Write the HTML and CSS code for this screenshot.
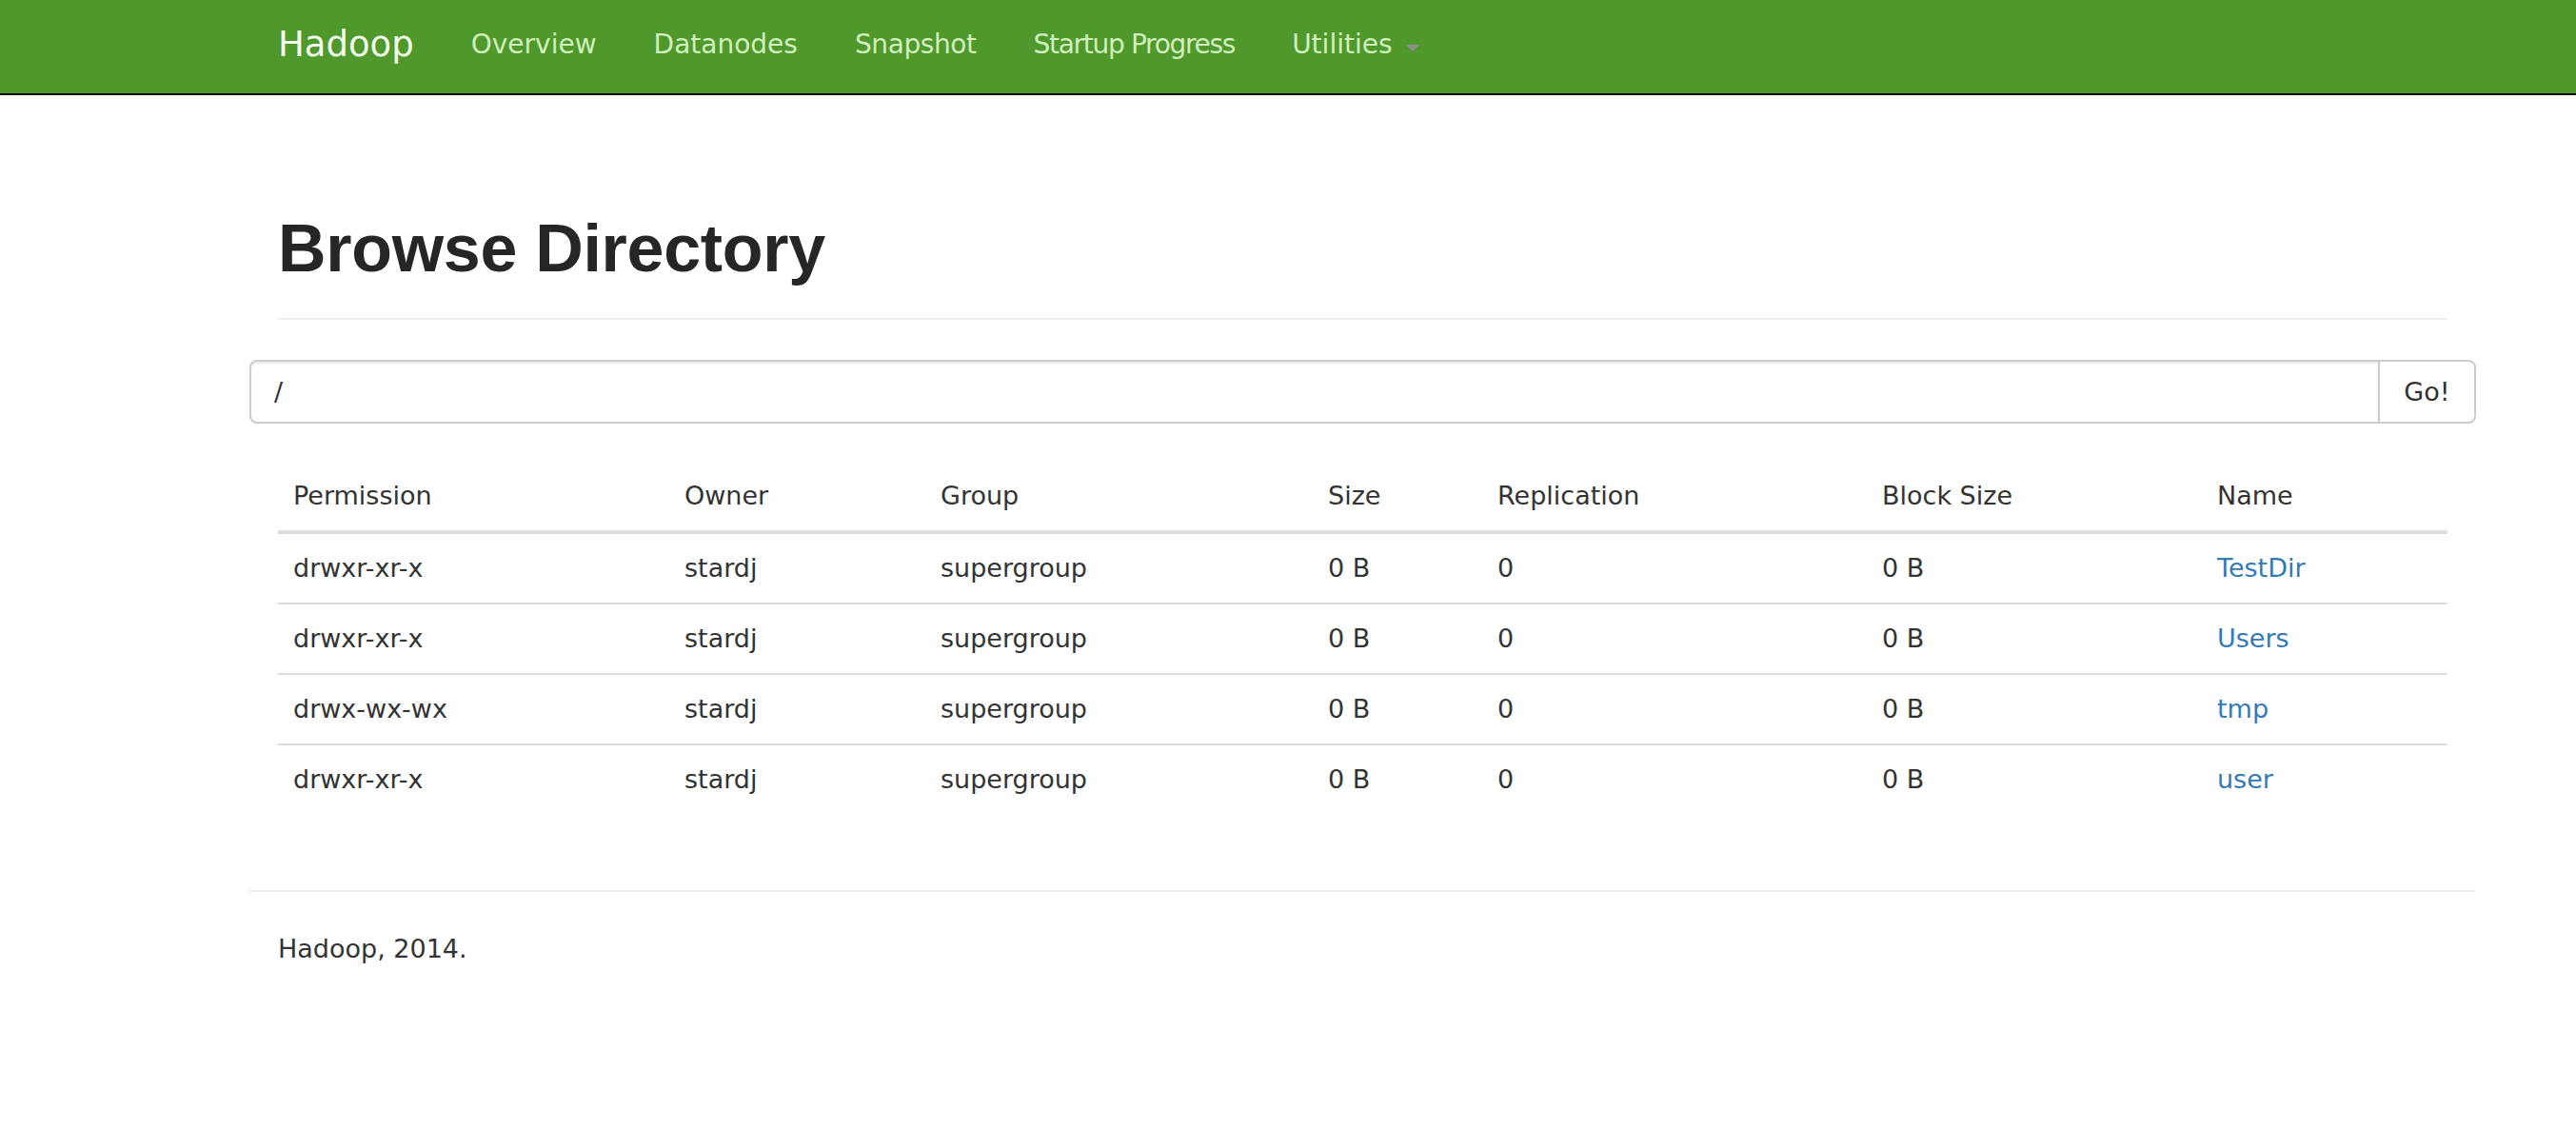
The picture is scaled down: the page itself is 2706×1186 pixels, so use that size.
FILE: index.html
```html
<!DOCTYPE html>
<html lang="en">
<head>
<meta charset="utf-8">
<title>Browsing HDFS</title>
<link rel="stylesheet" href="styles.css">
</head>
<body>
<header class="navbar">
  <div class="container nav-inner">
    <a class="brand" href="#">Hadoop</a>
    <ul class="nav">
      <li><a href="#">Overview</a></li>
      <li><a href="#">Datanodes</a></li>
      <li><a href="#" class="snug">Snapshot</a></li>
      <li><a href="#" class="tight">Startup Progress</a></li>
      <li><a href="#" class="dropdown">Utilities <span class="caret"></span></a></li>
    </ul>
  </div>
</header>

<main class="container">
  <div class="page-header">
    <h1>Browse Directory</h1>
  </div>

  <form class="input-group">
    <input class="path-input" type="text" value="/">
    <button class="go-btn" type="button">Go!</button>
  </form>

  <table class="listing">
    <colgroup>
      <col class="c-perm"><col class="c-owner"><col class="c-group"><col class="c-size"><col class="c-repl"><col class="c-block"><col class="c-name">
    </colgroup>
    <thead>
      <tr><th>Permission</th><th>Owner</th><th>Group</th><th>Size</th><th>Replication</th><th>Block Size</th><th>Name</th></tr>
    </thead>
    <tbody>
      <tr><td>drwxr-xr-x</td><td>stardj</td><td>supergroup</td><td>0 B</td><td>0</td><td>0 B</td><td><a href="#">TestDir</a></td></tr>
      <tr><td>drwxr-xr-x</td><td>stardj</td><td>supergroup</td><td>0 B</td><td>0</td><td>0 B</td><td><a href="#">Users</a></td></tr>
      <tr><td>drwx-wx-wx</td><td>stardj</td><td>supergroup</td><td>0 B</td><td>0</td><td>0 B</td><td><a href="#">tmp</a></td></tr>
      <tr><td>drwxr-xr-x</td><td>stardj</td><td>supergroup</td><td>0 B</td><td>0</td><td>0 B</td><td><a href="#">user</a></td></tr>
    </tbody>
  </table>

  <hr class="footer-rule">
  <footer class="footer">
    <p>Hadoop, 2014.</p>
  </footer>
</main>
</body>
</html>
```

FILE: styles.css
```css
* { box-sizing: border-box; }

html, body {
  margin: 0;
  padding: 0;
  background: #fff;
}

body {
  font-family: "DejaVu Sans", "Liberation Sans", sans-serif;
  font-size: 27px;
  line-height: 40px;
  color: #333;
}

a { text-decoration: none; }

.container {
  width: 2339px;
  margin-left: 262px;
  padding: 0 30px;
}

/* Navbar */
.navbar {
  background: #4f982c;
  height: 100px;
  border-bottom: 2px solid #0b0b0b;
}

.nav-inner {
  display: flex;
  align-items: center;
  height: 98px;
}

.brand {
  color: #f4fcee;
  font-size: 37px;
  line-height: 94px;
  padding-bottom: 4px;
  padding-right: 30px;
}

.nav {
  display: flex;
  list-style: none;
  margin: 0;
  padding: 0;
}

.nav a {
  display: flex;
  align-items: center;
  color: #cfefbd;
  font-size: 28px;
  line-height: 94px;
  padding: 0 30px 4px;
}

.nav a.snug {
  letter-spacing: -0.4px;
}

.nav a.tight {
  letter-spacing: -1.3px;
}

.caret {
  display: inline-block;
  width: 0;
  height: 0;
  margin-left: 14px;
  margin-top: 6px;
  border-top: 7px solid #8e8e8e;
  border-left: 7px solid transparent;
  border-right: 7px solid transparent;
}

/* Page header */
.page-header {
  margin-top: 121px;
  padding-bottom: 33px;
  border-bottom: 2px solid #eee;
}

.page-header h1 {
  margin: 0;
  font-family: "Liberation Sans", Arial, sans-serif;
  font-weight: bold;
  font-size: 70px;
  line-height: 80px;
  letter-spacing: -0.3px;
  color: #262626;
}

/* Input group */
.input-group {
  display: flex;
  margin: 42px -30px 0;
  height: 67px;
}

.path-input {
  flex: 1;
  height: 67px;
  border: 2px solid #ccc;
  border-right: none;
  border-radius: 8px 0 0 8px;
  padding: 0 24px;
  font-family: "DejaVu Sans", sans-serif;
  font-size: 27px;
  color: #333;
  box-shadow: inset 0 2px 2px rgba(0,0,0,0.075);
  outline: none;
}

.go-btn {
  width: 103px;
  height: 67px;
  border: 2px solid #ccc;
  border-radius: 0 8px 8px 0;
  background: #fff;
  font-family: "DejaVu Sans", sans-serif;
  font-size: 27px;
  color: #333;
  padding: 0;
}

/* Table */
.listing {
  width: 100%;
  margin-top: 40px;
  border-collapse: collapse;
  table-layout: fixed;
}

.c-perm { width: 411px; }
.c-owner { width: 269px; }
.c-group { width: 407px; }
.c-size { width: 178px; }
.c-repl { width: 404px; }
.c-block { width: 352px; }
.c-name { width: 258px; }

.listing th,
.listing td {
  padding: 16px;
  text-align: left;
  vertical-align: top;
  line-height: 40px;
  font-weight: normal;
  white-space: nowrap;
}

.listing thead th {
  border-bottom: 4px solid #ddd;
}

.listing tbody tr + tr td {
  border-top: 2px solid #ddd;
}

.listing td a { color: #337ab7; }

/* Footer */
.footer-rule {
  margin: 80px -30px 0;
  border: 0;
  border-top: 2px solid #eee;
}

.footer p {
  margin: 40px 0 0;
}
```
